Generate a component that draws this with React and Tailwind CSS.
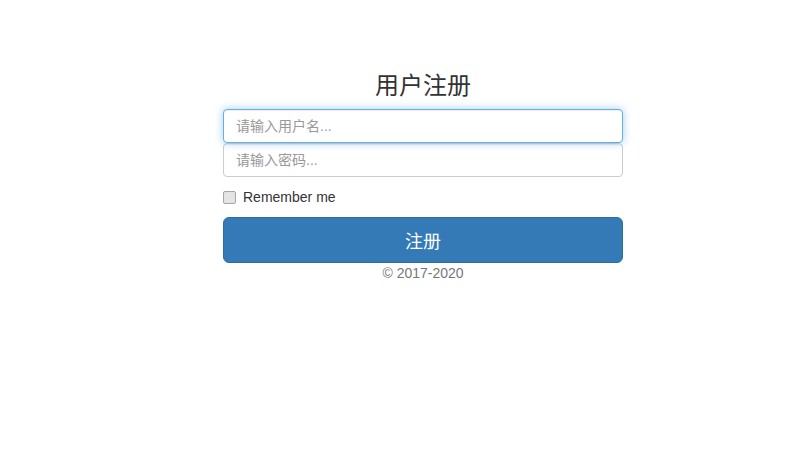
export default function App() {
  const font = { fontFamily: '"Liberation Sans", "Noto Sans CJK SC", sans-serif' };
  return (
    <div className="w-[800px] h-[460px] bg-white" style={font}>
      <form className="w-[400px] ml-[223px] pt-[71px] text-[14px] text-[#333]" onSubmit={(e) => e.preventDefault()}>
        <h3 className="text-center text-[24px] leading-[1.1] font-normal text-[#333] mb-[12px]" style={{ fontFamily: '"Noto Sans CJK SC", sans-serif' }}>用户注册</h3>
        <input
          type="text"
          autoFocus
          placeholder="请输入用户名..."
          className="block w-full h-[34px] px-[12px] text-[14px] text-[#555] bg-white border border-[#66afe9] rounded-[4px] outline-none shadow-[inset_0_1px_1px_rgba(0,0,0,0.075),0_0_8px_rgba(102,175,233,0.6)] placeholder:text-[#999] relative z-10"
        />
        <input
          type="password"
          placeholder="请输入密码..."
          className="block w-full h-[34px] px-[12px] text-[14px] text-[#555] bg-white border border-[#ccc] rounded-[4px] outline-none shadow-[inset_0_1px_1px_rgba(0,0,0,0.075)] placeholder:text-[#999]"
        />
        <div className="my-[10px] flex items-center h-[20px]">
          <label className="flex items-center">
            <input type="checkbox" className="appearance-none w-[13px] h-[13px] m-0 mr-[7px] border border-[#a6a6a6] bg-[#e4e4e4] rounded-[2px] checked:bg-[#337ab7]" />
            <span className="text-[14px] text-[#333]">Remember me</span>
          </label>
        </div>
        <button
          type="submit"
          className="block w-full h-[46px] text-[18px] text-white bg-[#337ab7] border border-[#2e6da4] rounded-[6px] leading-[1.333]"
          style={{ fontFamily: '"Noto Sans CJK SC", sans-serif' }}
        >
          注册
        </button>
        <p className="text-center text-[#777] leading-[20px]">© 2017-2020</p>
      </form>
    </div>
  );
}
